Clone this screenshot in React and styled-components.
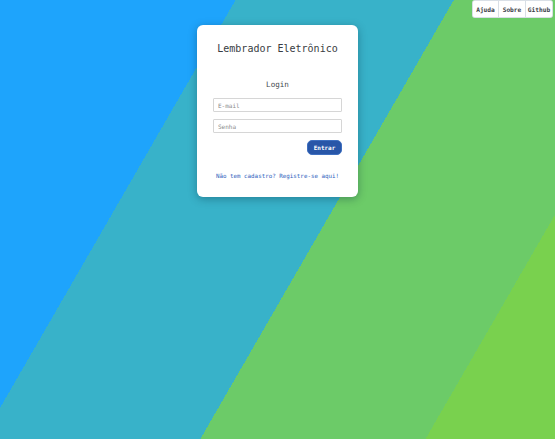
import React from "react";
import styled, { createGlobalStyle } from "styled-components";

const Global = createGlobalStyle`
  html, body { margin: 0; padding: 0; }
  body {
    min-height: 100vh;
    font-family: "DejaVu Sans Mono", "Liberation Mono", monospace;
    background: linear-gradient(120deg,
      #1ea4fc 0px, #1ea4fc 204px,
      #38b2c9 204px, #38b2c9 393px,
      #6ccb68 393px, #6ccb68 588px,
      #79d14e 588px);
    background-attachment: fixed;
  }
  * { box-sizing: border-box; }
`;

const Page = styled.div`
  display: flex;
  flex-direction: column;
  min-height: 100vh;
`;

const Header = styled.header`
  display: flex;
  justify-content: flex-end;
  padding: 1px 3px 0 0;
`;

const NavGroup = styled.nav`
  display: flex;
  background: #fff;
  border-radius: 2px;
  overflow: hidden;
  box-shadow: 0 0 0 1px #d9dfe6;
`;

const NavButton = styled.button`
  font-family: inherit;
  font-size: 6.2px;
  font-weight: bold;
  color: #3c4149;
  background: #fff;
  border: none;
  border-left: ${(p) => (p.$first ? "none" : "1px solid #d9dfe6")};
  height: 16px;
  width: ${(p) => p.$w}px;
  padding: 0;
  display: flex;
  align-items: center;
  justify-content: center;
`;

const Card = styled.main`
  width: 161px;
  margin: 8px auto 0;
  background: #fff;
  border-radius: 6px;
  box-shadow: 0 2px 8px rgba(0, 40, 60, 0.35);
  padding: 18px 16px 17px;
  display: flex;
  flex-direction: column;
`;

const Title = styled.h1`
  margin: 0;
  font-size: 10px;
  line-height: 12px;
  font-weight: normal;
  color: #383c42;
  text-align: center;
  white-space: nowrap;
`;

const Subtitle = styled.h2`
  margin: 25px 0 0;
  font-size: 7.6px;
  line-height: 10px;
  font-weight: normal;
  color: #454a50;
  text-align: center;
`;

const Form = styled.form`
  display: flex;
  flex-direction: column;
  gap: 7px;
  margin-top: 8px;
`;

const Input = styled.input`
  width: 100%;
  height: 14px;
  border: 1px solid #d6d6d6;
  border-radius: 1px;
  padding: 0 4px;
  font-family: inherit;
  font-size: 6px;
  color: #333;
  outline: none;
  &::placeholder { color: #8a8a8a; }
`;

const ButtonRow = styled.div`
  display: flex;
  justify-content: flex-end;
`;

const Submit = styled.button`
  width: 35px;
  height: 15px;
  border-radius: 5px;
  border: 1px solid #3e6fc0;
  background: #2856a8;
  color: #fff;
  font-family: inherit;
  font-size: 6px;
  font-weight: bold;
  padding: 0;
`;

const Link = styled.a`
  display: block;
  margin-top: 17px;
  font-size: 5.85px;
  line-height: 8px;
  color: #2e62bd;
  text-align: center;
  text-decoration: none;
  white-space: nowrap;
`;

export default function App() {
  return (
    <>
      <Global />
      <Page>
        <Header>
          <NavGroup>
            <NavButton $first $w={25}>Ajuda</NavButton>
            <NavButton $w={27}>Sobre</NavButton>
            <NavButton $w={27}>Github</NavButton>
          </NavGroup>
        </Header>
        <Card>
          <Title>Lembrador Eletrônico</Title>
          <Subtitle>Login</Subtitle>
          <Form onSubmit={(e) => e.preventDefault()}>
            <Input type="email" placeholder="E-mail" />
            <Input type="password" placeholder="Senha" />
            <ButtonRow>
              <Submit type="submit">Entrar</Submit>
            </ButtonRow>
          </Form>
          <Link href="#">Não tem cadastro? Registre-se aqui!</Link>
        </Card>
      </Page>
    </>
  );
}
